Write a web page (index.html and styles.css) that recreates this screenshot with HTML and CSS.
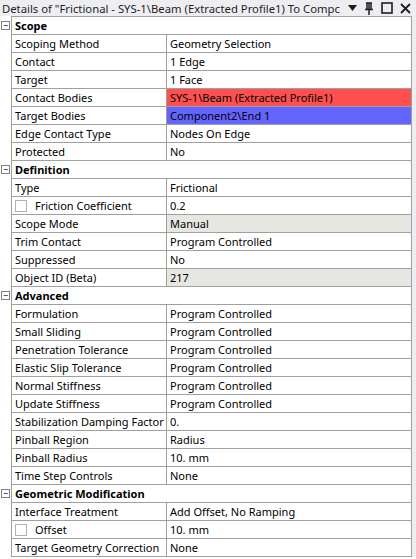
FILE: index.html
```html
<!DOCTYPE html>
<html lang="en">
<head>
  <meta charset="UTF-8">
  <title>Details</title>
  <link rel="stylesheet" href="styles.css">
</head>
<body>
  <div class="titlebar">
    <span class="title">Details of "Frictional - SYS-1\Beam (Extracted Profile1) To Compc</span>
    <span class="tools">
      <svg width="9" height="6" viewBox="0 0 9 6"><path d="M0 0h9L4.5 6z" fill="#1e1e1e"/></svg>
      <svg width="10" height="13" viewBox="0 0 10 13"><path d="M2 1h6M3 1v6M7 1v6M5 1v6M1 7.5h8M5 8v5" stroke="#1e1e1e" stroke-width="1.5" fill="none"/></svg>
      <svg width="12" height="12" viewBox="0 0 12 12"><rect x="1" y="1" width="10" height="10" stroke="#1e1e1e" stroke-width="1.6" fill="none"/></svg>
      <svg width="11" height="11" viewBox="0 0 11 11"><path d="M1 1l9 9M10 1l-9 9" stroke="#1e1e1e" stroke-width="1.8"/></svg>
    </span>
  </div>

  <div class="panel">
    <div class="group">
      <div class="row head"><span class="toggle">−</span><div class="cell">Scope</div></div>
      <div class="row"><div class="cell name">Scoping Method</div><div class="cell">Geometry Selection</div></div>
      <div class="row"><div class="cell name">Contact</div><div class="cell">1 Edge</div></div>
      <div class="row"><div class="cell name">Target</div><div class="cell">1 Face</div></div>
      <div class="row"><div class="cell name">Contact Bodies</div><div class="cell red">SYS-1\Beam (Extracted Profile1)</div></div>
      <div class="row"><div class="cell name">Target Bodies</div><div class="cell blue">Component2\End 1</div></div>
      <div class="row"><div class="cell name">Edge Contact Type</div><div class="cell">Nodes On Edge</div></div>
      <div class="row"><div class="cell name">Protected</div><div class="cell">No</div></div>
    </div>

    <div class="group">
      <div class="row head"><span class="toggle">−</span><div class="cell">Definition</div></div>
      <div class="row"><div class="cell name">Type</div><div class="cell">Frictional</div></div>
      <div class="row"><div class="cell name"><span class="check"></span>Friction Coefficient</div><div class="cell">0.2</div></div>
      <div class="row"><div class="cell name">Scope Mode</div><div class="cell readonly">Manual</div></div>
      <div class="row"><div class="cell name">Trim Contact</div><div class="cell">Program Controlled</div></div>
      <div class="row"><div class="cell name">Suppressed</div><div class="cell">No</div></div>
      <div class="row"><div class="cell name">Object ID (Beta)</div><div class="cell readonly">217</div></div>
    </div>

    <div class="group">
      <div class="row head"><span class="toggle">−</span><div class="cell">Advanced</div></div>
      <div class="row"><div class="cell name">Formulation</div><div class="cell">Program Controlled</div></div>
      <div class="row"><div class="cell name">Small Sliding</div><div class="cell">Program Controlled</div></div>
      <div class="row"><div class="cell name">Penetration Tolerance</div><div class="cell">Program Controlled</div></div>
      <div class="row"><div class="cell name">Elastic Slip Tolerance</div><div class="cell">Program Controlled</div></div>
      <div class="row"><div class="cell name">Normal Stiffness</div><div class="cell">Program Controlled</div></div>
      <div class="row"><div class="cell name">Update Stiffness</div><div class="cell">Program Controlled</div></div>
      <div class="row"><div class="cell name">Stabilization Damping Factor</div><div class="cell">0.</div></div>
      <div class="row"><div class="cell name">Pinball Region</div><div class="cell">Radius</div></div>
      <div class="row"><div class="cell name">Pinball Radius</div><div class="cell">10. mm</div></div>
      <div class="row"><div class="cell name">Time Step Controls</div><div class="cell">None</div></div>
    </div>

    <div class="group">
      <div class="row head"><span class="toggle">−</span><div class="cell">Geometric Modification</div></div>
      <div class="row"><div class="cell name">Interface Treatment</div><div class="cell">Add Offset, No Ramping</div></div>
      <div class="row"><div class="cell name"><span class="check"></span>Offset</div><div class="cell">10. mm</div></div>
      <div class="row"><div class="cell name">Target Geometry Correction</div><div class="cell">None</div></div>
    </div>
  </div>
</body>
</html>
```

FILE: styles.css
```css
body {
  margin: 0;
  padding: 0;
  background-color: #ffffff;
  font-family: "Noto Sans", "Open Sans", sans-serif;
  font-size: 11px;
  color: #000000;
  width: 416px;
  overflow: hidden;
}
.titlebar {
  display: flex;
  align-items: center;
  height: 16px;
  background-color: #eeeef2;
  padding-left: 2px;
  font-size: 11.3px;
  color: #1e1e1e;
}
.title {
  width: 343px;
  white-space: nowrap;
  flex-shrink: 0;
}
.tools {
  display: flex;
  align-items: center;
  gap: 7px;
  padding-left: 3px;
}
.panel {
  display: flex;
  border-right: 4px solid #eeeef2;
  flex-direction: column;
}
.row {
  position: relative;
  display: grid;
  grid-template-columns: 155px 1fr;
  height: 18px;
  margin-left: 11px;
  border-left: 1px solid #a0a0a0;
  border-right: 1px solid #a0a0a0;
  border-bottom: 1px solid #a0a0a0;
  box-sizing: border-box;
}
.group:first-child .row:first-child {
  border-top: 1px solid #a0a0a0;
  height: 19px;
}
.row.head {
  grid-template-columns: 1fr;
  font-weight: bold;
}
.cell {
  display: flex;
  align-items: center;
  padding-left: 3px;
  white-space: nowrap;
  overflow: hidden;
}
.name {
  border-right: 1px solid #a0a0a0;
}
.red {
  background-color: #ff5050;
}
.blue {
  background-color: #6464ff;
}
.readonly {
  background-color: #e6e6e2;
}
.toggle {
  position: absolute;
  left: -11px;
  top: 4px;
  width: 7px;
  height: 7px;
  border: 1px solid #808080;
  font-size: 9px;
  line-height: 7px;
  text-align: center;
  font-weight: normal;
  background: #ffffff;
}
.check {
  display: inline-block;
  width: 10px;
  height: 10px;
  border: 1px solid #b0b0b0;
  margin-right: 8px;
  background: #ffffff;
}
```
